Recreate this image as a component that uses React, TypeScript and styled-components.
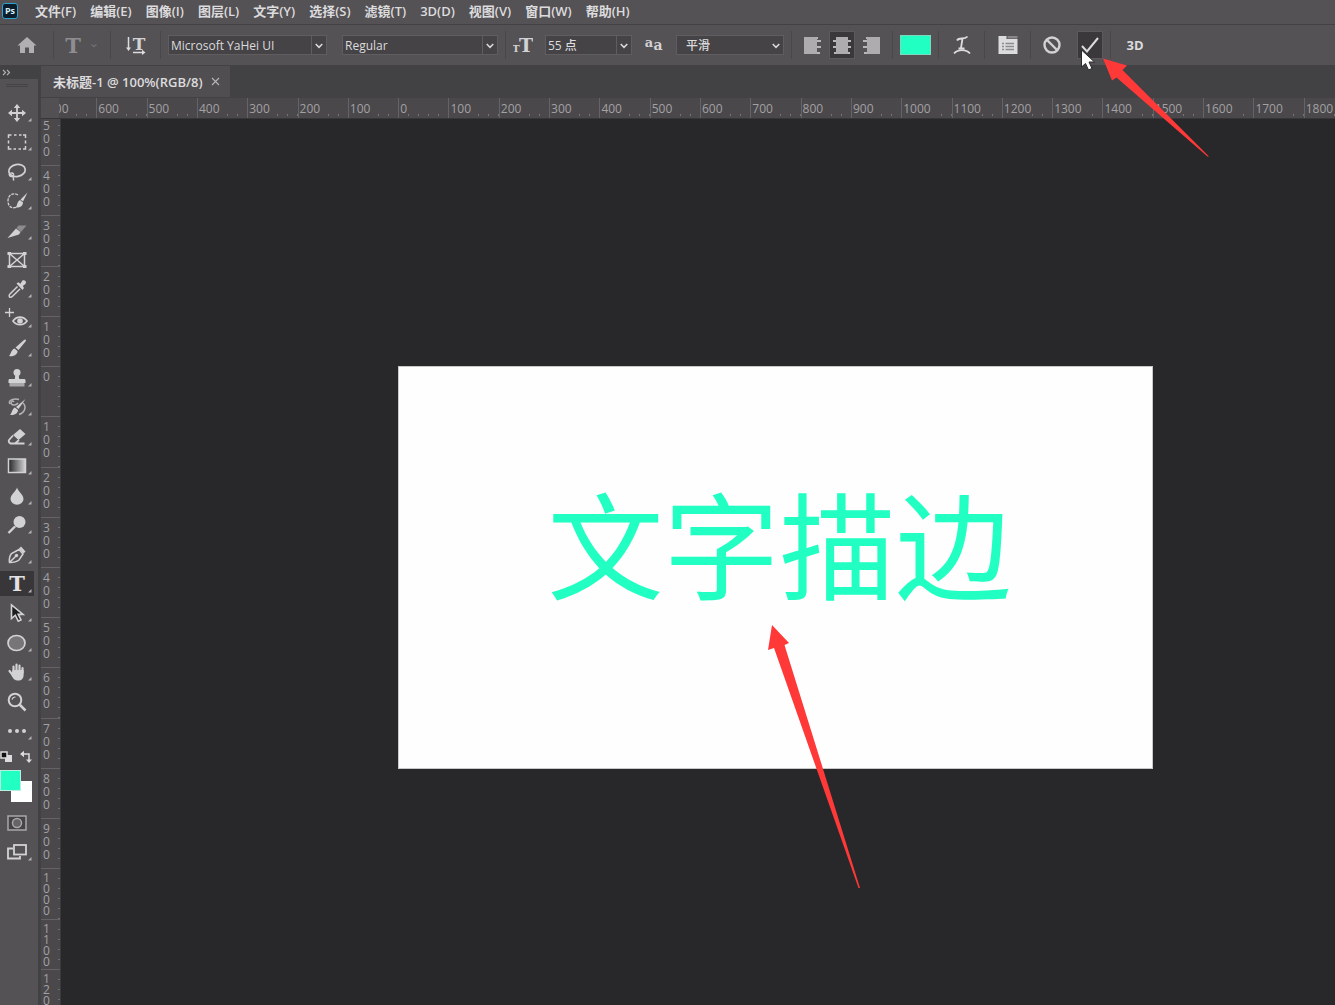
import React from 'react';
import styled, { createGlobalStyle, css } from 'styled-components';

const SANS = '"Open Sans", "Noto Sans CJK SC", sans-serif';
const CJK = '"Noto Sans CJK SC", sans-serif';
const SLAB = '"DejaVu Serif", serif';

const color = {
  bar: '#545255',
  barLine: '#434144',
  dark: '#424143',
  ruler: '#4a484b',
  tick: '#656366',
  stage: '#28282a',
  text: '#dcdbdd',
  icon: '#d2d1d3',
  dim: '#a3a1a4',
  field: '#454346',
  fieldLine: '#5f5d60',
  accent: '#22ffc3',
  marker: '#ff3838',
};

const GlobalStyle = createGlobalStyle`
  *, *::before, *::after { box-sizing: border-box; }
  body { margin: 0; background: ${color.stage}; font-family: ${SANS}; }
  button, select { font: inherit; color: inherit; margin: 0; }
  button { padding: 0; border: 0; background: none; }
`;

const Shell = styled.div`
  position: relative;
  display: flex;
  flex-direction: column;
  height: 100vh;
  overflow: hidden;
  color: ${color.text};
`;

/* ---------- menu bar ---------- */

const MenuBar = styled.nav`
  display: flex;
  flex: none;
  align-items: center;
  gap: 14px;
  height: 24px;
  padding: 0 2px 3px;
  background: ${color.bar};
`;

const AppBadge = styled.span`
  display: grid;
  place-items: center;
  width: 16px;
  height: 16px;
  margin-right: 3px;
  border: 1px solid #2fa3cf;
  border-radius: 3px;
  background: #0b1c2b;
  color: #d4f0fb;
  font-size: 9px;
  line-height: 12px;
  font-weight: 700;
`;

const MenuItem = styled.button`
  font-size: 13px;
  line-height: 20px;
  font-weight: 600;
  white-space: nowrap;
`;

/* ---------- options bar ---------- */

const OptionsBar = styled.div`
  display: flex;
  flex: none;
  align-items: center;
  height: 42px;
  padding: 0 7px;
  background: ${color.bar};
  border-top: 1px solid ${color.barLine};
  border-bottom: 1px solid ${color.barLine};
`;

const Group = styled.div<{ $gap?: number }>`
  display: flex;
  align-items: center;
  gap: ${(p) => p.$gap ?? 0}px;
`;

const Divider = styled.span`
  flex: none;
  width: 1px;
  height: 28px;
  margin: 0 7px;
  background: #494749;
`;

const OptionButton = styled.button<{ $width?: number; $active?: boolean }>`
  display: grid;
  place-items: center;
  flex: none;
  width: ${(p) => p.$width ?? 26}px;
  height: 28px;
  font-size: 13px;
  line-height: 20px;
  font-weight: 700;
  ${(p) =>
    p.$active &&
    css`
      background: #3a383b;
      outline: 1px solid #5c5a5d;
      outline-offset: -1px;
    `}
`;

const IconBox = styled.span`
  display: grid;
  place-items: center;
  width: 20px;
  height: 28px;
`;

const Field = styled.label<{ $width: number; $split?: boolean }>`
  position: relative;
  display: flex;
  flex: none;
  width: ${(p) => p.$width}px;
  height: 20px;
  border: 1px solid ${color.fieldLine};
  background: ${color.field};

  select {
    flex: 1;
    min-width: 0;
    padding: 1px 16px 0 ${(p) => (p.$split ? 2 : 9)}px;
    border: 0;
    border-radius: 0;
    background: transparent;
    appearance: none;
    font-size: 12px;
    line-height: 18px;
    font-weight: 500;
    outline: none;
  }

  svg {
    position: absolute;
    right: 0;
    top: 0;
    border-left: 1px solid ${(p) => (p.$split ? color.fieldLine : 'transparent')};
    pointer-events: none;
  }
`;

const Swatch = styled.button`
  width: 31px;
  height: 20px;
  border: 1px solid #79d8bd;
  background: ${color.accent};
`;

/* ---------- workspace ---------- */

const Workspace = styled.div`
  display: flex;
  flex: 1;
  min-height: 0;
  gap: 3px;
  background: ${color.dark};
`;

const ToolPanel = styled.aside`
  display: flex;
  flex-direction: column;
  flex: none;
  width: 38px;
  background: ${color.bar};
`;

const PanelToggle = styled.button`
  display: flex;
  align-items: center;
  flex: none;
  height: 13px;
  padding-left: 2px;
  background: ${color.dark};
`;

const Grip = styled.span`
  flex: none;
  height: 3px;
  margin: 5px 10px 11px 6px;
  border-top: 1px solid #454346;
  border-bottom: 1px solid #454346;
`;

const ToolList = styled.div`
  display: grid;
  grid-auto-rows: 1fr;
  align-items: center;
  flex: none;
  height: 648px;
`;

const Tool = styled.button<{ $active?: boolean }>`
  display: flex;
  align-items: center;
  flex: none;
  width: 34px;
  height: 25px;
  padding-left: 7px;
  background: ${(p) => (p.$active ? '#383639' : 'transparent')};
  color: ${color.icon};

  svg {
    flex: none;
    overflow: visible;
  }
`;

const ColorToggles = styled.div`
  display: flex;
  align-items: center;
  justify-content: space-between;
  flex: none;
  height: 24px;
  padding-right: 5px;
`;

const ColorPair = styled.div`
  position: relative;
  flex: none;
  height: 33px;
  margin-bottom: 5px;
`;

const ColorChip = styled.button<{ $back?: boolean }>`
  position: absolute;
  left: ${(p) => (p.$back ? 11 : 0)}px;
  top: ${(p) => (p.$back ? 11 : 0)}px;
  width: 21px;
  height: 21px;
  border: 1px solid ${(p) => (p.$back ? '#ffffff' : '#b9efe0')};
  background: ${(p) => (p.$back ? '#ffffff' : color.accent)};
`;

const ViewButtons = styled.div`
  display: flex;
  flex-direction: column;
  gap: 4px;
  padding-top: 2px;
`;

const DocumentArea = styled.main`
  display: flex;
  flex-direction: column;
  flex: 1;
  min-width: 0;
`;

const Tabs = styled.div`
  display: flex;
  flex: none;
  height: 32px;
  border-bottom: 1px solid ${color.barLine};
`;

const Tab = styled.div`
  display: flex;
  align-items: center;
  gap: 8px;
  padding: 0 10px 0 12px;
  background: #504e51;
  font-size: 13px;
  line-height: 20px;
  font-weight: 600;
  white-space: nowrap;
`;

const CloseButton = styled.button`
  display: grid;
  place-items: center;
  width: 9px;
  height: 20px;
  color: #b4b2b5;
`;

const TopRuler = styled.div`
  display: flex;
  flex: none;
  height: 21px;
  background: ${color.ruler};
  border-bottom: 1px solid #363537;
`;

const RulerCorner = styled.span`
  flex: none;
  width: 18px;
  background: #525053;
`;

const RulerWindow = styled.div`
  flex: 1;
  min-width: 0;
  overflow: hidden;
`;

const HorizontalScale = styled.div`
  display: grid;
  grid-auto-flow: column;
  grid-auto-columns: 1fr;
  width: 1308px;
  height: 20px;
  margin-left: -13px;
`;

const HorizontalMark = styled.div`
  border-left: 1px solid ${color.tick};
  background: repeating-linear-gradient(to right, transparent 0 9px, #777578 9px 10px) 0 16px / 100% 2px
    no-repeat;

  span {
    display: inline-block;
    height: 20px;
    padding: 2px 1px 0;
    background: ${color.ruler};
    color: ${color.dim};
    font-size: 12px;
    line-height: 18px;
    vertical-align: top;
  }
`;

const StageRow = styled.div`
  display: flex;
  flex: 1;
  min-height: 0;
`;

const SideRuler = styled.div`
  flex: none;
  width: 20px;
  overflow: hidden;
  background: ${color.ruler};
  border-right: 1px solid #3a393b;
`;

const VerticalScale = styled.div`
  display: grid;
  grid-auto-rows: 1fr;
  height: 904px;
  margin-top: -4px;
`;

const VerticalMark = styled.div<{ $tight?: boolean }>`
  min-height: 0;
  padding: 3px 9px 0 2px;
  border-top: 1px solid ${color.tick};
  background: repeating-linear-gradient(to bottom, transparent 0 9px, #706e71 9px 10px) 17px 0 / 2px 100%
    no-repeat;
  color: ${color.dim};
  font-size: 12px;
  line-height: ${(p) => (p.$tight ? 11 : 13)}px;
  word-break: break-all;
`;

const Stage = styled.section`
  flex: 1;
  min-width: 0;
  padding: 247px 0 0 337px;
  overflow: hidden;
  background: ${color.stage};
`;

const Artboard = styled.div`
  display: flex;
  align-items: center;
  justify-content: center;
  width: 755px;
  height: 403px;
  padding: 0 0 56px 8px;
  border: 1px solid #c9c9c9;
  background: #fefefe;
`;

const ArtText = styled.p`
  margin: 0;
  color: ${color.accent};
  font-family: ${CJK};
  font-size: 116px;
  line-height: 120px;
  font-weight: 400;
  white-space: nowrap;
`;

const Overlay = styled.svg`
  position: absolute;
  left: 0;
  top: 0;
  pointer-events: none;
`;

/* ---------- icons ---------- */

const Svg = ({ w = 20, h = 20, children }: { w?: number; h?: number; children: React.ReactNode }) => (
  <svg width={w} height={h} viewBox={`0 0 ${w} ${h}`} fill="none" stroke="currentColor" strokeWidth="1.5" aria-hidden="true">
    {children}
  </svg>
);

const F = { fill: 'currentColor', stroke: 'none' };

const slab = (size: number, x: number, y: number, fill = 'currentColor', ch = 'T') => (
  <text x={x} y={y} fontFamily={SLAB} fontWeight="700" fontSize={size} fill={fill} stroke="none" textAnchor="middle">
    {ch}
  </text>
);

const Chevron = () => (
  <Svg w={15} h={18}>
    <path d="M4 8l3.5 3.5L11 8" strokeWidth="1.6" />
  </Svg>
);

type ToolDef = { name: string; more?: boolean; active?: boolean; art: React.ReactNode };

const tools: ToolDef[] = [
  {
    name: '移动工具',
    more: true,
    art: (
      <>
        <path d="M10 4v12M4 10h12" strokeWidth="1.800" />
        <path {...F} d="M10 1l3.2 4H6.800zM10 19l3.200-4H6.800zM1 10l4-3.200v6.400zM19 10l-4-3.200v6.400z" />
      </>
    ),
  },
  {
    name: '矩形选框工具',
    more: true,
    art: <path d="M1.500 6V3h3M7 3h2.500M12 3h2.500M16 3h2.500v3M18.500 8.500v3M18.500 14v3h-2.500M14 17h-2.500M9 17H6.500M4.500 17h-3v-3M1.500 11.500v-3" />,
  },
  {
    name: '套索工具',
    more: true,
    art: (
      <>
        <ellipse cx="10" cy="8.500" rx="8.300" ry="6" transform="rotate(-10 10 8.500)" strokeWidth="1.700" />
        <path d="M3 11c-2 2 .5 4.500 2.500 3s1-3.500-2-3M5.500 14.500c1.500 1 1 2.500 1 4" />
      </>
    ),
  },
  {
    name: '快速选择工具',
    more: true,
    art: (
      <>
        <path d="M11 4C6 1 1 4 1 10s4 8 9 6" strokeDasharray="3 1" strokeWidth="1.300" />
        <path {...F} d="M20.500 1.500L16 10.500l-2.500-2zM13 9l3 2.500c0 3.500-3 5.500-7.500 5 2-2 1.500-6 4.500-7.500z" />
      </>
    ),
  },
  {
    name: '切片工具',
    more: true,
    art: (
      <>
        <path {...F} d="M.5 17L9 7.500l4.500 3.500-1.500 2.500z" />
        <path {...F} fill="#8d8b8e" d="M9.500 7l2-2.500h8L14 11z" />
      </>
    ),
  },
  {
    name: '图框工具',
    art: (
      <>
        <path d="M2.500 3.500h15v13h-15zM3 4l14 12M17 4L3 16" />
        <path {...F} d="M.5 2h3.500v3H.5zM16 2h3.500v3H16zM.5 15h3.500v3H.5zM16 15h3.500v3H16z" />
      </>
    ),
  },
  {
    name: '吸管工具',
    more: true,
    art: (
      <>
        <path d="M10.500 7.500L3 15c-1 1-1 2.500-.5 3 1 .5 2 .2 3-.8L13 10" />
        <path {...F} d="M9.500 4.500l1.800-1.200 2.200 1.500 1.700-3c2-1.500 4.700.5 3.500 2.900l-2.900 2.200 1.200 2.100-1.500 2z" />
      </>
    ),
  },
  {
    name: '红眼工具',
    more: true,
    art: (
      <>
        <path d="M2.500-1v9M-2 3.500h9" strokeWidth="1.300" />
        <path d="M6 12c3.500-5.300 10.500-5.300 14 0-3.500 5-10.500 5-14 0z" strokeWidth="1.700" />
        <circle cx="13" cy="12" r="2.800" {...F} />
      </>
    ),
  },
  {
    name: '画笔工具',
    more: true,
    art: (
      <>
        <path {...F} d="M18.500 1.500c.8.500.3 1.500 0 2L11.500 12 8.500 9.500 17 2c.5-.5 1-.7 1.500-.5z" />
        <path {...F} d="M7.500 10.500l3 2.500c.2 3.800-4.500 6-8.500 5 2-1.500 2-6.500 5.500-7.500z" />
      </>
    ),
  },
  {
    name: '仿制图章工具',
    more: true,
    art: (
      <>
        <circle cx="10" cy="4.500" r="3.500" {...F} />
        <path {...F} d="M8.500 6h3l.7 5H17c1 0 1.500.5 1.500 1.500V15h-17v-2.500c0-1 .5-1.500 1.500-1.500h4.800z" />
        <path {...F} fill="#a9a7aa" d="M2.500 15h15v3.500h-15z" />
      </>
    ),
  },
  {
    name: '历史记录画笔工具',
    more: true,
    art: (
      <>
        <path d="M3 7c-3-4 5-6 9-4.500M7 5c-1-2-4 0-2.500 2s5 1 6.500-1M16 6c4 4 1.500 10-4 11.500" stroke="#b4b2b5" />
        <path {...F} d="M18.500 2L11.500 12 9 10zM8 10.500l3 2.500c.2 3.500-4 5.500-8 5 2-1.500 2-6.500 5-7.500z" />
      </>
    ),
  },
  {
    name: '橡皮擦工具',
    more: true,
    art: (
      <>
        <path {...F} d="M13 2l5.500 5-7 6-5.500-5z" />
        <path d="M6 8.500L2 13c-.8 1 0 2.500 1.500 3.500H8l4-3.500M8 16.500h9.500" strokeWidth="1.800" />
      </>
    ),
  },
  {
    name: '渐变工具',
    more: true,
    art: (
      <>
        <defs>
          <linearGradient id="ramp">
            <stop offset="0" stopColor="#252426" />
            <stop offset="1" stopColor="#d5d4d6" />
          </linearGradient>
        </defs>
        <rect x="1.500" y="3" width="17" height="13.500" fill="url(#ramp)" />
      </>
    ),
  },
  { name: '模糊工具', more: true, art: <path {...F} d="M10 1.500c1 4 6.500 7 6.500 11.500a6.500 5.800 0 0 1-13 0C3.500 8.500 9 5.500 10 1.500z" /> },
  {
    name: '减淡工具',
    more: true,
    art: (
      <>
        <circle cx="12.500" cy="7" r="6" {...F} />
        <path d="M8 11.500L1.500 18" strokeWidth="2.400" />
      </>
    ),
  },
  {
    name: '钢笔工具',
    more: true,
    art: (
      <>
        <path d="M2.500 17.500C2 14 2.500 11 4.500 8.500l7.500-4 4 4.500-4 6c-2.500 2-6 2.500-9.500 2.500zM3 17l6-6" />
        <circle cx="9.500" cy="10.500" r="1.700" {...F} />
        <path {...F} d="M12 3.500l2-2 4.500 5-2 2z" />
      </>
    ),
  },
  { name: '横排文字工具', more: true, active: true, art: slab(21, 10, 17, '#e2e1e3') },
  {
    name: '路径选择工具',
    more: true,
    art: <path d="M4.500 2v13.500l3.800-3.300 3 6 2.700-1.300-2.800-5.500H16z" fill="#1d1c1e" strokeWidth="1.600" />,
  },
  { name: '椭圆工具', more: true, art: <ellipse cx="9.500" cy="10" rx="8.500" ry="7.500" fill="#777578" strokeWidth="1.700" /> },
  {
    name: '抓手工具',
    more: true,
    art: (
      <>
        <path d="M6.500 10V4.500M9.500 9V2.500M12.500 9V3.500M15.500 11V6M2.500 9l4 5" strokeWidth="2.200" strokeLinecap="round" />
        <path {...F} d="M5.500 8h11.100v5c0 3.500-2 5.500-5.300 5.500-3.800 0-5.300-2-6.800-5z" />
      </>
    ),
  },
  {
    name: '缩放工具',
    art: (
      <>
        <circle cx="8" cy="8" r="6.300" strokeWidth="2" />
        <path d="M5 7.500C5.500 5.500 7 5 8.500 5" strokeWidth="1.200" />
        <path d="M12.500 12.500l6 6" strokeWidth="2.500" />
      </>
    ),
  },
  {
    name: '编辑工具栏',
    more: true,
    art: (
      <g {...F}>
        <circle cx="3" cy="10" r="2" />
        <circle cx="10" cy="10" r="2" />
        <circle cx="17" cy="10" r="2" />
      </g>
    ),
  },
];

const ToolIcon = ({ art, more }: { art: React.ReactNode; more?: boolean }) => (
  <Svg>
    {art}
    {more && <path {...F} fill="#b4b2b5" d="M24.500 15v3.500H21z" />}
  </Svg>
);

/* A paragraph block: each entry is the left and right end of one text line. */
const AlignIcon = ({ rows }: { rows: [number, number][] }) => {
  const left = Math.max(...rows.map((r) => r[0]));
  const right = Math.min(...rows.map((r) => r[1]));
  return (
    <Svg>
      <path {...F} fill="#b9b7ba" d={rows.map(([a, b], i) => `M${a} ${2 + i * 3}h${b - a}v2h${a - b}z`).join('')} />
      <path {...F} fill="#aeacaf" d={`M${left} 2h${right - left}v17H${left}z`} />
    </Svg>
  );
};

/* ---------- data ---------- */

const menus = [
  '文件(F)', '编辑(E)', '图像(I)', '图层(L)', '文字(Y)', '选择(S)',
  '滤镜(T)', '3D(D)', '视图(V)', '窗口(W)', '帮助(H)',
];

const scale = (from: number, to: number) =>
  Array.from({ length: (to - from) / 100 + 1 }, (_, i) => from + i * 100);

const horizontal = scale(-700, 1800);
const vertical = scale(-500, 1200);

const Choice = ({ label, value, width, split = true }: { label: string; value: string; width: number; split?: boolean }) => (
  <Field $width={width} $split={split}>
    <select aria-label={label} defaultValue={value}>
      <option>{value}</option>
    </select>
    <Chevron />
  </Field>
);

export default function App() {
  return (
    <Shell>
      <GlobalStyle />
      <MenuBar>
        <AppBadge>Ps</AppBadge>
        {menus.map((m) => (
          <MenuItem key={m}>{m}</MenuItem>
        ))}
      </MenuBar>

      <OptionsBar>
        <OptionButton $width={39} aria-label="主页">
          <Svg>
            <path {...F} fill="#b1afb2" d="M10 2l9.500 8.500H17V18h-5v-5.500H8V18H3v-7.500H.5z" />
          </Svg>
        </OptionButton>
        <Divider />
        <Group>
          <OptionButton $width={24} aria-label="文字工具预设">
            <Svg w={24} h={28}>{slab(21, 12, 22, '#8f8d90')}</Svg>
          </OptionButton>
          <OptionButton $width={18} aria-label="预设选取器">
            <Svg w={10} h={10}>
              <path d="M2.500 4.500L5 6.500l2.500-2" stroke="#6f6d70" />
            </Svg>
          </OptionButton>
        </Group>
        <Divider />
        <OptionButton $width={35} aria-label="切换文本取向">
          <Svg w={22} h={28}>
            {slab(17, 14, 19, color.icon)}
            <path d="M3.500 6v11M8 21.500h10" />
            <path {...F} d="M1 16.500h5L3.500 20zM17 18.800v5.200l3.500-2.600z" />
          </Svg>
        </OptionButton>
        <Divider />
        <Group $gap={15}>
          <Choice label="字体" value="Microsoft YaHei UI" width={159} />
          <Choice label="字体样式" value="Regular" width={156} />
        </Group>
        <Divider />
        <Group $gap={12}>
          <IconBox>
            <Svg h={28}>
              {slab(10, 3, 21, color.icon)}
              {slab(19, 13, 21, color.icon)}
            </Svg>
          </IconBox>
          <Choice label="字号" value="55 点" width={87} />
          <IconBox>
            <Svg h={28}>
              {slab(13, 5, 16, color.icon, 'a')}
              {slab(14, 14, 19, color.icon, 'a')}
            </Svg>
          </IconBox>
          <Choice label="消除锯齿" value="平滑" width={108} split={false} />
        </Group>
        <Divider />
        <Group $gap={4}>
          <OptionButton aria-label="左对齐文本">
            <AlignIcon rows={[[2, 16], [2, 19], [2, 15], [2, 19], [2, 15], [2, 18]]} />
          </OptionButton>
          <OptionButton $active aria-label="居中对齐文本">
            <AlignIcon rows={[[4, 16], [1, 19], [4, 16], [1, 19], [4, 16], [2, 18]]} />
          </OptionButton>
          <OptionButton aria-label="右对齐文本">
            <AlignIcon rows={[[4, 18], [1, 18], [5, 18], [1, 18], [5, 18], [2, 18]]} />
          </OptionButton>
        </Group>
        <Divider />
        <Swatch aria-label="文本颜色" />
        <Divider />
        <OptionButton $width={31} aria-label="创建文字变形">
          <Svg>
            <path d="M5 5.500C7 1.500 12 5.500 15.500 1.500M10.500 3.500L9 13M6.500 13.500h6" strokeWidth="1.800" />
            <path d="M2 18.500c4-4.500 12-4.500 16 0" strokeWidth="1.800" />
          </Svg>
        </OptionButton>
        <Divider />
        <OptionButton $width={31} aria-label="切换字符和段落面板">
          <Svg>
            <path {...F} d="M.5 1h8v3h11v15H.5z" />
            <path {...F} fill="#88868a" d="M9.500 1h10v2.500h-10z" />
            <path d="M4 8.500h2M7.500 8.500H16M4 11.500h2M7.500 11.500H16M4 14.500h2M7.500 14.500H16" stroke="#8d8b8e" />
          </Svg>
        </OptionButton>
        <Divider />
        <Group $gap={11}>
          <OptionButton $width={28} aria-label="取消所有当前编辑">
            <Svg>
              <circle cx="10" cy="10" r="7.500" strokeWidth="2.400" stroke={color.icon} />
              <path d="M4.500 4.500l11 11" strokeWidth="2.400" stroke={color.icon} />
            </Svg>
          </OptionButton>
          <OptionButton $active aria-label="提交所有当前编辑">
            <Svg>
              <path d="M2 11l5 5.500L18 3" strokeWidth="2" />
            </Svg>
          </OptionButton>
        </Group>
        <Divider />
        <OptionButton $width={34}>3D</OptionButton>
      </OptionsBar>

      <Workspace>
        <ToolPanel>
          <PanelToggle aria-label="展开面板">
            <Svg w={9} h={7}>
              <path d="M1 .8l2.500 2.700L1 6.200M5 .8l2.500 2.700L5 6.200" strokeWidth="1.200" stroke="#b4b2b5" />
            </Svg>
          </PanelToggle>
          <Grip />
          <ToolList>
            {tools.map((t) => (
              <Tool key={t.name} $active={t.active} aria-label={t.name}>
                <ToolIcon art={t.art} more={t.more} />
              </Tool>
            ))}
          </ToolList>
          <ColorToggles>
            <button aria-label="默认颜色">
              <Svg w={14} h={14}>
                <path {...F} d="M5 5h7v7H5z" />
                <path d="M1 2h6v6H1z" fill="#111" />
              </Svg>
            </button>
            <button aria-label="切换颜色">
              <Svg w={14} h={14}>
                <path d="M4 4h6v6" />
                <path {...F} d="M1 4l4-3.200v6.400zM10 13L7 9.500h6z" />
              </Svg>
            </button>
          </ColorToggles>
          <ColorPair>
            <ColorChip $back aria-label="背景色" />
            <ColorChip aria-label="前景色" />
          </ColorPair>
          <ViewButtons>
            <Tool aria-label="快速蒙版">
              <ToolIcon
                art={
                  <>
                    <rect x="1" y="3" width="18" height="14" stroke="#a9a7aa" fill="#454346" />
                    <circle cx="10" cy="10" r="4.500" fill="#656366" stroke="#a9a7aa" />
                  </>
                }
              />
            </Tool>
            <Tool aria-label="屏幕模式">
              <ToolIcon
                more
                art={
                  <>
                    <path d="M6 6.500H1v10h12V14" strokeWidth="1.800" />
                    <rect x="7" y="3" width="12" height="9.500" fill="#545255" strokeWidth="1.800" />
                  </>
                }
              />
            </Tool>
          </ViewButtons>
        </ToolPanel>

        <DocumentArea>
          <Tabs>
            <Tab>
              <span>未标题-1 @ 100%(RGB/8)</span>
              <CloseButton aria-label="关闭">
                <Svg w={9} h={9}>
                  <path d="M1 1l7 7M8 1L1 8" strokeWidth="1.200" />
                </Svg>
              </CloseButton>
            </Tab>
          </Tabs>
          <TopRuler>
            <RulerCorner />
            <RulerWindow>
              <HorizontalScale>
                {horizontal.map((v) => (
                  <HorizontalMark key={v}>
                    <span>{Math.abs(v)}</span>
                  </HorizontalMark>
                ))}
              </HorizontalScale>
            </RulerWindow>
          </TopRuler>
          <StageRow>
            <SideRuler>
              <VerticalScale>
                {vertical.map((v) => (
                  <VerticalMark key={v} $tight={v >= 1000}>
                    {Math.abs(v)}
                  </VerticalMark>
                ))}
              </VerticalScale>
            </SideRuler>
            <Stage>
              <Artboard>
                <ArtText>文字描边</ArtText>
              </Artboard>
            </Stage>
          </StageRow>
        </DocumentArea>
      </Workspace>

      <Overlay width="1335" height="1005" viewBox="0 0 1335 1005" aria-hidden="true">
        <path
          d="M1081.500 50v17l4-3.500 3 6.500 3.500-1.500-3-6.500h5.500z"
          fill="#ffffff"
          stroke="#2a292b"
          strokeWidth="1"
        />
        <path fill={color.marker} d="M1103 58.500l24 7-4.500 4.500L1209 156.500h-1.500L1116.500 77.500l-4.500 3z" />
        <path fill={color.marker} d="M772 625l17 18-4.500 2L860 888h-1.500L774 648l-6 2z" />
      </Overlay>
    </Shell>
  );
}
